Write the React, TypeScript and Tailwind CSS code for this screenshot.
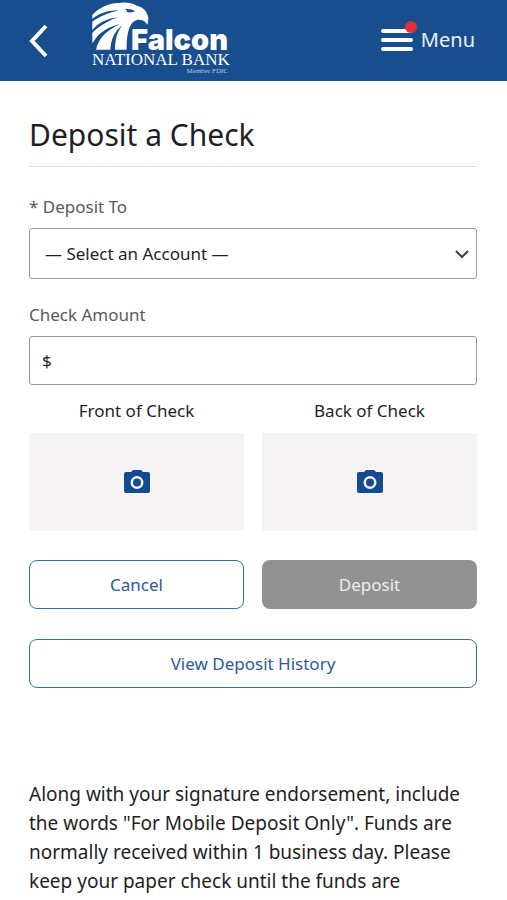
import React from 'react';

const SIDES = [
  { id: 'front', label: 'Front of Check' },
  { id: 'back', label: 'Back of Check' },
];

function FalconLogo() {
  return (
    <svg width="140" height="81" viewBox="0 0 140 81" role="img" aria-label="Falcon National Bank" className="block shrink-0">
      {/* Falcon head */}
      <svg x="0" y="1" width="58" height="52" viewBox="0 0 174 156">
        <path
          fill="#fff"
          d="M1 42C22 18 52 5 90 5c18-1 32 2 44 9 22 4 34 22 35 38 0 8-1 14-3 19-5-10-16-16-29-15-26 6-33 42-33 90H1z"
        />
        {/* Gaps between the feathers */}
        <g fill="#184e8e">
          <path d="M0 54c24-18 50-27 78-25C52 33 24 46 0 62z" />
          <path d="M0 88c18-22 44-35 78-39C52 58 26 72 0 96z" />
          <path d="M0 126c3 0 3-2 5-5 14-24 42-44 80-52-40 18-66 42-73 78H0z" />
          <path d="M55 147c1-30 13-56 36-74-17 22-22 46-22 74z" />
          <path d="M98 25c12-2 22 0 31 6-7 4-18 4-25 2 2-4 0-6-6-8z" />
        </g>
      </svg>
      <text x="39" y="50" fill="#fff" fontSize="29" className="font-['Inter',sans-serif] font-black">
        Falcon
      </text>
      <text x="0" y="65" fill="#fff" fontSize="17" className="font-['Liberation_Serif',serif]">
        NATIONAL BANK
      </text>
      <text x="136" y="73" textAnchor="end" fill="#b9cde6" fontSize="7" className="font-['Liberation_Serif',serif]">
        Member FDIC
      </text>
    </svg>
  );
}

function CameraIcon() {
  return (
    <svg width="26" height="24" viewBox="0 0 26 24" aria-hidden="true">
      <path
        fill="#124b91"
        fillRule="evenodd"
        d="M9 0h8l2 2h5a2 2 0 0 1 2 2v17a2 2 0 0 1-2 2H2a2 2 0 0 1-2-2V4a2 2 0 0 1 2-2h5zM13 6a6.500 6.500 0 1 0 0 13a6.500 6.500 0 1 0 0-13zM13 8.500a4 4 0 1 1 0 8a4 4 0 1 1 0-8z"
      />
    </svg>
  );
}

export default function App() {
  return (
    <div className="min-h-screen bg-white font-['Noto_Sans',sans-serif] text-[17px] text-[#1f1f1f]">
      <header className="flex h-[81px] items-center justify-between bg-[#184e8e] pr-8 pl-7 text-white">
        <div className="flex items-center gap-11">
          <button type="button" aria-label="Back">
            <svg width="20" height="34" viewBox="0 0 20 34" fill="none" stroke="currentColor" strokeWidth="4">
              <path d="M18 2L4 17l14 15" />
            </svg>
          </button>
          <FalconLogo />
        </div>
        <button type="button" className="flex items-center gap-2 pb-0.5 text-[20px] text-[#e8eff8]">
          <span className="relative">
            <svg width="32" height="22" viewBox="0 0 32 22" fill="none" stroke="#fff" strokeWidth="4" strokeLinecap="round">
              <path d="M2 2h28M2 11h28M2 20h28" />
            </svg>
            <span className="absolute -top-2 -right-1 size-3 rounded-full bg-[#dc3135]" />
          </span>
          Menu
        </button>
      </header>

      <main className="pr-[30px] pl-[29px]">
        <h1 className="border-b border-[#dedede] pt-[33px] pb-[11px] text-[30px] leading-[41px]">Deposit a Check</h1>

        <form>
          <label htmlFor="account" className="mt-7 block leading-6 text-[#5a5a5a]">
            * Deposit To
          </label>
          <div className="relative mt-[9px]">
            <select
              id="account"
              className="h-[51px] w-full appearance-none rounded-[3px] border border-[#999] bg-white px-[15px]"
            >
              <option>— Select an Account —</option>
            </select>
            <svg
              width="14"
              height="9"
              viewBox="0 0 14 9"
              fill="none"
              stroke="#3d3d3d"
              strokeWidth="2"
              className="pointer-events-none absolute top-[22px] right-2"
            >
              <path d="M1 1l6 6 6-6" />
            </svg>
          </div>

          <label htmlFor="amount" className="mt-6 block leading-6 text-[#5a5a5a]">
            Check Amount
          </label>
          <div className="mt-[9px] flex h-[49px] items-center rounded-[3px] border border-[#999] px-3">
            <span>$</span>
            <input id="amount" type="text" inputMode="decimal" className="ml-1 w-full outline-none" />
          </div>

          <div className="mt-3 grid grid-cols-2 gap-[18px]">
            {SIDES.map((side) => (
              <div key={side.id} className="text-center">
                <span id={side.id} className="block leading-7">
                  {side.label}
                </span>
                <button
                  type="button"
                  aria-labelledby={side.id}
                  className="mt-2 flex h-[98px] w-full items-center justify-center bg-[#f5f3f4]"
                >
                  <CameraIcon />
                </button>
              </div>
            ))}
          </div>

          <div className="mt-[29px] grid grid-cols-2 gap-[18px]">
            <button type="button" className="h-[49px] rounded-lg border border-[#3a6ea6] text-[#2c5a9b]">
              Cancel
            </button>
            <button type="submit" disabled className="h-[49px] rounded-lg bg-[#929292] text-[#ececec]">
              Deposit
            </button>
          </div>
          <button type="button" className="mt-[30px] h-[49px] w-full rounded-lg border border-[#3a6ea6] text-[#2c5a9b]">
            View Deposit History
          </button>
        </form>

        <p className="mt-[92px] text-[19px] leading-[29px]">
          Along with your signature endorsement, include the words "For Mobile Deposit Only". Funds are normally
          received within 1 business day. Please keep your paper check until the funds are
        </p>
      </main>
    </div>
  );
}
